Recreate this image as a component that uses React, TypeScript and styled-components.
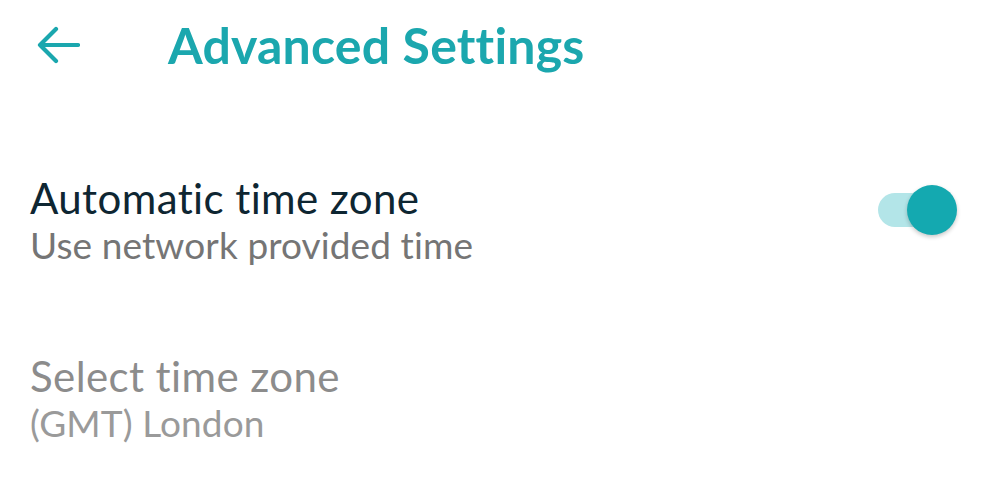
import React, { useState } from 'react';
import styled, { createGlobalStyle } from 'styled-components';

const GlobalStyle = createGlobalStyle`
  html, body {
    margin: 0;
    padding: 0;
    background: #ffffff;
  }
  body {
    font-family: Lato, 'Noto Sans', Arial, sans-serif;
    font-variant-ligatures: none;
  }
`;

export default function App() {
  const [automatic, setAutomatic] = useState(true);

  return (
    <Screen>
      <GlobalStyle />
      <Header>
        <BackButton aria-label="Back">
          <svg width="44" height="38" viewBox="0 0 44 38" fill="none">
            <path
              d="M42 19H4M20 3L4 19l16 16"
              stroke="#1ba7ae"
              strokeWidth="4.2"
              strokeLinecap="round"
              strokeLinejoin="round"
            />
          </svg>
        </BackButton>
        <Title>Advanced Settings</Title>
      </Header>

      <List>
        <Row>
          <TextBlock>
            <Primary>Automatic time zone</Primary>
            <Secondary>Use network provided time</Secondary>
          </TextBlock>
          <Switch $on={automatic} onClick={() => setAutomatic(!automatic)}>
            <Knob $on={automatic} />
          </Switch>
        </Row>
        <Row>
          <TextBlock>
            <Primary $disabled={automatic}>Select time zone</Primary>
            <Secondary $disabled={automatic}>(GMT) London</Secondary>
          </TextBlock>
        </Row>
      </List>
    </Screen>
  );
}

const Screen = styled.div`
  width: 998px;
  height: 486px;
  overflow: hidden;
  background: #ffffff;
`;

const Header = styled.header`
  display: flex;
  align-items: center;
  height: 90px;
  padding-left: 36px;
`;

const BackButton = styled.button`
  display: flex;
  align-items: center;
  justify-content: center;
  border: none;
  background: none;
  padding: 0;
  width: 44px;
  height: 44px;
  margin-right: 88px;
  cursor: pointer;
`;

const Title = styled.h1`
  margin: 0;
  font-size: 50px;
  font-weight: 700;
  color: #1ba7ae;
  letter-spacing: 0.2px;
`;

const List = styled.div`
  display: flex;
  flex-direction: column;
  padding-top: 85px;
`;

const Row = styled.div`
  display: flex;
  align-items: flex-start;
  justify-content: space-between;
  padding: 0 40px 0 30px;
  height: 178px;
`;

const TextBlock = styled.div`
  display: flex;
  flex-direction: column;
`;

const Primary = styled.div<{ $disabled?: boolean }>`
  font-size: 42px;
  line-height: 46px;
  letter-spacing: 0.4px;
  color: ${(p) => (p.$disabled ? '#8c8c8c' : '#0e2632')};
`;

const Secondary = styled.div<{ $disabled?: boolean }>`
  font-size: 37px;
  line-height: 47px;
  letter-spacing: 0.1px;
  color: ${(p) => (p.$disabled ? '#9a9a9a' : '#757575')};
`;

const Switch = styled.div<{ $on: boolean }>`
  position: relative;
  width: 62px;
  height: 34px;
  margin-top: 18px;
  margin-right: 18px;
  border-radius: 17px;
  background: ${(p) => (p.$on ? '#b3e5e8' : '#d0d0d0')};
  cursor: pointer;
`;

const Knob = styled.div<{ $on: boolean }>`
  position: absolute;
  top: -8px;
  left: ${(p) => (p.$on ? '29px' : '-12px')};
  width: 50px;
  height: 50px;
  border-radius: 50%;
  background: ${(p) => (p.$on ? '#14a9b0' : '#f5f5f5')};
  box-shadow: 0 2px 4px rgba(0, 0, 0, 0.22);
`;
